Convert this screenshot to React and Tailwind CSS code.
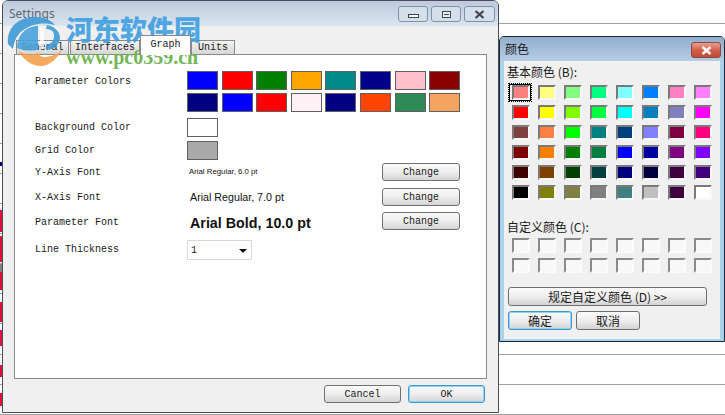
import React from 'react';

const mono = "font-['Liberation_Mono',monospace] text-[10px] text-[#1a1a1a]";
const cjk = "font-['Noto_Sans_CJK_SC','Noto_Sans',sans-serif] text-[12px] text-[#1a1a1a]";

const parameterColors = [
  'bg-[#0000ff]', 'bg-[#ff0000]', 'bg-[#008000]', 'bg-[#ffa500]', 'bg-[#008b8b]', 'bg-[#00008b]', 'bg-[#ffc0cb]', 'bg-[#8b0000]',
  'bg-[#000080]', 'bg-[#0000ff]', 'bg-[#ff0000]', 'bg-[#fff0f5]', 'bg-[#000080]', 'bg-[#ff4500]', 'bg-[#2e8b57]', 'bg-[#f4a460]',
];

const basicColors = [
  'bg-[#ff8080]', 'bg-[#ffff80]', 'bg-[#80ff80]', 'bg-[#00ff80]', 'bg-[#80ffff]', 'bg-[#0080ff]', 'bg-[#ff80c0]', 'bg-[#ff80ff]',
  'bg-[#ff0000]', 'bg-[#ffff00]', 'bg-[#80ff00]', 'bg-[#00ff40]', 'bg-[#00ffff]', 'bg-[#0080c0]', 'bg-[#8080c0]', 'bg-[#ff00ff]',
  'bg-[#804040]', 'bg-[#ff8040]', 'bg-[#00ff00]', 'bg-[#008080]', 'bg-[#004080]', 'bg-[#8080ff]', 'bg-[#800040]', 'bg-[#ff0080]',
  'bg-[#800000]', 'bg-[#ff8000]', 'bg-[#008000]', 'bg-[#008040]', 'bg-[#0000ff]', 'bg-[#0000a0]', 'bg-[#800080]', 'bg-[#8000ff]',
  'bg-[#400000]', 'bg-[#804000]', 'bg-[#004000]', 'bg-[#004040]', 'bg-[#000080]', 'bg-[#000040]', 'bg-[#400040]', 'bg-[#400080]',
  'bg-[#000000]', 'bg-[#808000]', 'bg-[#808040]', 'bg-[#808080]', 'bg-[#408080]', 'bg-[#c0c0c0]', 'bg-[#400040]', 'bg-[#ffffff]',
];

// left edge of the window behind: little marks peeking out per row
const backgroundRows = [
  { h: 'h-[24px]' }, { h: 'h-[30px]' }, { h: 'h-[30px]' }, { h: 'h-[30px]' }, { h: 'h-[30px]' },
  { h: 'h-[30px]', mark: 'bg-[#000080] h-[4px] mt-[18px]' },
  { h: 'h-[30px]' },
  { h: 'h-[30px]', mark: 'bg-[#e0103a] h-[22px] mt-[6px]' },
  { h: 'h-[30px]', mark: 'bg-[#e0103a] h-[26px] mt-[2px]' },
  { h: 'h-[30px]', mark: 'bg-gradient-to-b from-[#808080] from-30% to-[#e0103a] to-30% h-[26px]' },
  { h: 'h-[30px]', mark: 'bg-[#e0103a] h-[20px] mt-[8px]' },
  { h: 'h-[31px]', mark: 'bg-[#d81840] h-[16px] mt-[6px]' },
  { h: 'h-[30px]', mark: 'bg-[#e0103a] h-[12px] mt-[10px]' },
  { h: 'h-[30px]', mark: 'bg-[#e0103a] h-[13px] mt-[8px]' },
];

const WinButton = ({ children, className = '', focus = false }) => (
  <button
    className={`box-border flex items-center justify-center rounded-[3px] border bg-gradient-to-b from-[#fafafa] via-[#eeeeee] to-[#d4d4d4] ${
      focus ? 'border-[#3c9ac9] ring-1 ring-inset ring-[#8fd4f0]' : 'border-[#707070]'
    } ${className}`}
  >
    {children}
  </button>
);

const Logo = () => (
  <svg className="absolute left-[4px] top-[14px] opacity-90" width="60" height="54" viewBox="0 0 60 54">
    <path d="M4 30C2 12 17 2 33 3C41 3.500 47 6 51 11C41 8 28 9 18 17C13 21 10 27 9 35Z" fill="#3f9bd6" />
    <path d="M13 34C13 21 22 12 34 12L34 36C27 37 19 37 13 34Z" fill="#4aa3dc" />
    <path d="M36 13L40 13L40 35L36 35Z" fill="#ffffff" opacity="0.8" />
    <path d="M43 11C54 13 58 22 55 28C53 33 48 36 42 36L42 31C48 30 50 26 50 22C50 17 47 15 42 15Z" fill="#3f9bd6" />
    <path d="M14 37C20 46 28 52 37 52C45 52 53 45 58 36C52 41 46 43 40 43C36 43 35 40 34 38C30 42 22 41 14 37Z" fill="#f4a14f" />
  </svg>
);

const Watermark = () => (
  <div className="pointer-events-none absolute left-0 top-0 h-[70px] w-[210px]">
    <Logo />
    <div className="absolute left-[66px] top-[10px] whitespace-nowrap font-['Noto_Sans_CJK_SC',sans-serif] text-[27px] font-black leading-[38px] text-[#3f9fe0] opacity-90">
      河东软件园
    </div>
    <div className="absolute left-[66px] top-[46px] whitespace-nowrap font-['Liberation_Serif',serif] text-[20px] font-bold leading-[22px] text-[#6cb34e] opacity-95">
      www.pc0359.cn
    </div>
  </div>
);

const Tab = ({ label, active, className }) => (
  <div
    className={`box-border flex items-center justify-center border border-[#8a8a8a] ${mono} ${
      active
        ? 'z-10 -mb-px h-[20px] bg-white pb-[3px] border-b-0'
        : 'h-[14px] border-b-0 bg-gradient-to-b from-[#f4f4f4] to-[#d6d6d6]'
    } ${className}`}
  >
    {label}
  </div>
);

const FontRow = ({ label, sample, labelClass = '', sampleClass, mt }) => (
  <div className={`flex h-[18px] items-center ${mt}`}>
    <span className={`w-[152px] ${mono} ${labelClass}`}>{label}</span>
    <span className={`w-[195px] font-['Liberation_Sans',sans-serif] text-[#111] ${sampleClass}`}>{sample}</span>
    <WinButton className={`h-[18px] w-[78px] ${mono}`}>Change</WinButton>
  </div>
);

const SettingsWindow = () => (
  <div className="absolute left-[2px] top-0 box-border flex h-[413px] w-[497px] flex-col rounded-t-[6px] border border-[#4a4f57] bg-[#f0f0f0]">
    {/* title */}
    <div className="flex h-[25px] items-start justify-between rounded-t-[5px] bg-gradient-to-b from-[#bccadb] to-[#dbe5f0] pl-[6px] pr-[3px]">
      <span className="mt-[5px] font-['Noto_Sans',sans-serif] text-[12px] leading-[16px] text-[#5d6670]">Settings</span>
      <div className="mt-[5px] flex gap-[3px]">
        <div className="flex h-[16px] w-[30px] items-end justify-center rounded-[3px] border border-[#7f93a8] bg-[#d5dfea] pb-[3px]">
          <div className="h-[4px] w-[11px] border border-[#3c4650] bg-white" />
        </div>
        <div className="flex h-[16px] w-[30px] items-center justify-center rounded-[3px] border border-[#7f93a8] bg-[#d5dfea]">
          <div className="flex h-[7px] w-[9px] items-center justify-center border border-[#3c4650] bg-[#eef2f6]">
            <div className="h-[1px] w-[5px] bg-[#3c4650]" />
          </div>
        </div>
        <div className="flex h-[16px] w-[31px] items-center justify-center rounded-[3px] border border-[#7f93a8] bg-[#d5dfea]">
          <svg width="11" height="9" viewBox="0 0 11 9">
            <path d="M1.500 1L9.500 8M9.500 1L1.500 8" stroke="#3c4650" strokeWidth="2.200" fill="none" />
          </svg>
        </div>
      </div>
    </div>

    {/* tabs */}
    <div className="ml-[13px] mt-[10px] flex h-[18px] items-end">
      <Tab label="General" className="w-[53px]" />
      <Tab label="Interfaces" className="ml-px w-[70px]" />
      <Tab label="Graph" active className="w-[51px]" />
      <Tab label="Units" className="w-[44px]" />
    </div>

    {/* graph tab panel */}
    <div className="mx-[11px] box-border flex h-[325px] w-[473px] flex-col border border-[#8a8a8a] bg-white pl-[20px] pt-[16px]">
      <div className="flex h-[41px]">
        <span className={`mt-[5px] w-[152px] leading-[12px] ${mono}`}>Parameter Colors</span>
        <div className="grid grid-cols-[repeat(8,31px)] grid-rows-[19px_19px] gap-x-[3.600px] gap-y-[3px]">
          {parameterColors.map((c, i) => (
            <div key={i} className={`box-border border border-[#606060] ${c}`} />
          ))}
        </div>
      </div>
      <div className="mt-[6px] flex h-[19px] items-center">
        <span className={`w-[152px] ${mono}`}>Background Color</span>
        <div className="box-border h-[19px] w-[31px] border border-[#606060] bg-white" />
      </div>
      <div className="mt-[4px] flex h-[19px] items-center">
        <span className={`w-[152px] ${mono}`}>Grid Color</span>
        <div className="box-border h-[19px] w-[31px] border border-[#606060] bg-[#a9a9a9]" />
      </div>
      <FontRow label="Y-Axis Font" sample="Arial Regular, 6.0 pt" sampleClass="pl-[2px] text-[7.800px]" mt="mt-[3px]" />
      <FontRow label="X-Axis Font" sample="Arial Regular, 7.0 pt" sampleClass="pl-[3px] text-[10.700px]" mt="mt-[7px]" />
      <FontRow label="Parameter Font" labelClass="pt-[2px]" sample="Arial Bold, 10.0 pt" sampleClass="pl-[3px] pt-[5px] text-[14.300px] font-bold" mt="mt-[6px]" />
      <div className="mt-[10px] flex h-[20px] items-center">
        <span className={`w-[152px] pb-[2px] ${mono}`}>Line Thickness</span>
        <div className="box-border flex h-[20px] w-[65px] items-center justify-between border border-[#d8d8d8] pl-[3px] pr-[4px]">
          <span className={mono}>1</span>
          <div className="mt-[2px] h-0 w-0 border-x-[4px] border-t-[4px] border-x-transparent border-t-[#111]" />
        </div>
      </div>
    </div>

    {/* footer */}
    <div className="mt-[6px] flex justify-end gap-[7px] pr-[13px]">
      <WinButton className={`h-[18px] w-[77px] ${mono}`}>Cancel</WinButton>
      <WinButton focus className={`h-[18px] w-[77px] ${mono}`}>OK</WinButton>
    </div>
  </div>
);

const ColorDialog = () => (
  <div className="absolute left-[499px] top-[36px] box-border flex h-[306px] w-[226px] flex-col rounded-t-[5px] border border-[#1c2530] bg-[#a9d3ec]">
    <div className="flex h-[24px] items-start justify-between rounded-t-[4px] bg-gradient-to-b from-[#93aecd] to-[#b6cde4] pl-[5px] pr-[3px]">
      <span className={`mt-[3px] leading-[18px] ${cjk}`}>颜色</span>
      <div className="mt-[5px] flex h-[16px] w-[30px] items-center justify-center rounded-[3px] border border-[#8a4a40] bg-gradient-to-b from-[#e8a090] via-[#d2604c] to-[#c04a3a]">
        <svg width="11" height="9" viewBox="0 0 11 9">
          <path d="M1.500 1L9.500 8M9.500 1L1.500 8" stroke="#ffffff" strokeWidth="2.400" fill="none" />
        </svg>
      </div>
    </div>
    <div className="mx-[4px] mb-[2px] flex flex-1 flex-col bg-[#f0f0f0] pl-[3px]">
      <div className={`mt-[2px] leading-[18px] ${cjk}`}>基本颜色 (B):</div>
      <div className="ml-[5px] mt-[4px] grid grid-cols-[repeat(8,18px)] gap-x-[8px] gap-y-[5px]">
        {basicColors.map((c, i) => (
          <div key={i} className="relative">
            {i === 0 && (
              <div className="absolute -bottom-[2px] -left-[4px] -right-[2px] -top-[2px] border border-dotted border-black outline outline-1 -outline-offset-2 outline-black" />
            )}
            <div className={`box-border h-[15px] w-[18px] border-2 border-b-[#f8f8f8] border-l-[#7a7a7a] border-r-[#f8f8f8] border-t-[#7a7a7a] ${c}`} />
          </div>
        ))}
      </div>
      <div className={`mt-[18px] leading-[18px] ${cjk}`}>自定义颜色 (C):</div>
      <div className="ml-[5px] mt-[2px] grid grid-cols-[repeat(8,18px)] gap-x-[8px] gap-y-[5px]">
        {Array.from({ length: 16 }, (_, i) => (
          <div key={i} className="box-border h-[15px] w-[18px] border-2 border-b-[#fbfbfb] border-l-[#8a8a8a] border-r-[#fbfbfb] border-t-[#8a8a8a] bg-[#f8f8f8]" />
        ))}
      </div>
      <WinButton className={`ml-px mt-[14px] h-[19px] w-[199px] ${cjk}`}>规定自定义颜色 (D) &gt;&gt;</WinButton>
      <div className="ml-px mt-[5px] flex gap-[4px]">
        <WinButton focus className={`h-[19px] w-[64px] ${cjk}`}>确定</WinButton>
        <WinButton className={`h-[19px] w-[64px] ${cjk}`}>取消</WinButton>
      </div>
    </div>
  </div>
);

const App = () => (
  <div className="relative h-[415px] w-[725px] overflow-hidden bg-white">
    {/* table rows of the app behind the dialogs */}
    <div className="flex flex-col">
      {backgroundRows.map((row, i) => (
        <div key={i} className={`box-border border-b border-[#a0a0a0] ${row.h}`}>
          {row.mark && <div className={`w-[2px] ${row.mark}`} />}
        </div>
      ))}
    </div>
    <SettingsWindow />
    <ColorDialog />
    <Watermark />
  </div>
);

export default App;
